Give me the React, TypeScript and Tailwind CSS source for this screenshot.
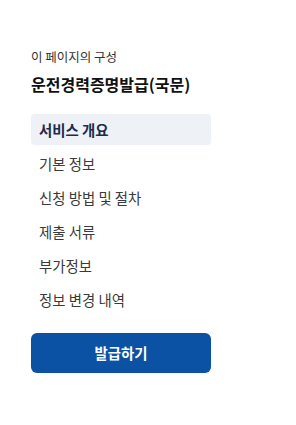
import React from "react";

const items = ["기본 정보", "신청 방법 및 절차", "제출 서류", "부가정보", "정보 변경 내역"];

export default function App() {
  return (
    <div
      className="w-[296px] h-[425px] bg-white pl-[31px] pt-[50px]"
      style={{ fontFamily: '"Noto Sans CJK KR", "Noto Sans", sans-serif' }}
    >
      <div className="w-[180px] flex flex-col">
        <p className="text-[12.5px] leading-[14px] text-[#333]">이 페이지의 구성</p>
        <h2 className="mt-[8px] text-[16px] leading-[24px] font-bold text-[#111]">운전경력증명발급(국문)</h2>
        <ul className="mt-[18px] flex flex-col gap-[3px]">
          <li className="h-[31px] rounded-[4px] bg-[#eef1f6] px-[8px] flex items-center text-[14.4px] font-bold text-[#1c2c4c]">
            서비스 개요
          </li>
          {items.map((t) => (
            <li key={t} className="h-[31px] px-[8px] flex items-center text-[14.4px] text-[#3a3a3a]">
              {t}
            </li>
          ))}
        </ul>
        <button className="mt-[18px] w-[180px] h-[40px] rounded-[6px] bg-[#0b52a4] text-white text-[14.4px] font-bold">
          발급하기
        </button>
      </div>
    </div>
  );
}
